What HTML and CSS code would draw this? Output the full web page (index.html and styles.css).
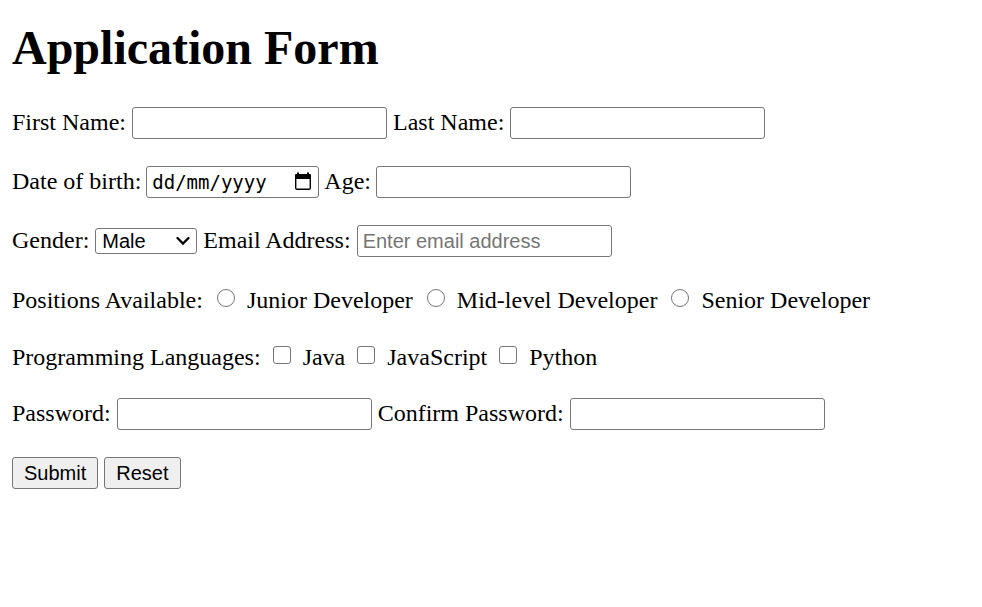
FILE: index.html
```html
<!DOCTYPE html>
<html lang="en">
<head>
<meta charset="utf-8">
<title>Application Form</title>
<link rel="stylesheet" href="styles.css">
</head>
<body>
<h1>Application Form</h1>
<form>
  <div class="row">
    <label for="first">First Name:</label>
    <input class="field" type="text" id="first">
    <label for="last">Last Name:</label>
    <input class="field" type="text" id="last">
  </div>
  <div class="row date-row">
    <label for="dob">Date of birth:</label>
    <span class="date">
      <input class="field date-field" type="text" id="dob" placeholder="dd/mm/yyyy">
      <svg class="calendar" viewBox="0 0 18 20" aria-hidden="true"><path d="M2 3h14q1 0 1 1v13q0 2-2 2H3q-2 0-2-2V4q0-1 1-1zM2.4 8v9.6h13.2V8z" fill-rule="evenodd"/><path d="M3 1.5h2v2H3zM13 1.5h2v2h-2z"/></svg>
    </span>
    <label for="age">Age:</label>
    <input class="field" type="text" id="age">
  </div>
  <div class="row">
    <label for="gender">Gender:</label>
    <span class="select">
      <select class="field select-field" id="gender"><option>Male</option><option>Female</option></select>
      <svg class="chevron" viewBox="0 0 14 10" aria-hidden="true"><path d="M1.5 2L7 7.5 12.5 2"/></svg>
    </span>
    <label for="email">Email Address:</label>
    <input class="field" type="email" id="email" placeholder="Enter email address">
  </div>
  <div class="row choices">
    <span>Positions Available:</span>
    <label class="choice"><input class="radio" type="radio" name="position">Junior Developer</label>
    <label class="choice"><input class="radio" type="radio" name="position">Mid-level Developer</label>
    <label class="choice"><input class="radio" type="radio" name="position">Senior Developer</label>
  </div>
  <div class="row choices languages">
    <span>Programming Languages:</span>
    <label class="choice"><input class="check" type="checkbox">Java</label>
    <label class="choice"><input class="check" type="checkbox">JavaScript</label>
    <label class="choice"><input class="check" type="checkbox">Python</label>
  </div>
  <div class="row">
    <label for="password">Password:</label>
    <input class="field" type="password" id="password">
    <label for="confirm">Confirm Password:</label>
    <input class="field" type="password" id="confirm">
  </div>
  <div class="row">
    <button class="button" type="submit">Submit</button>
    <button class="button" type="reset">Reset</button>
  </div>
</form>
</body>
</html>
```
FILE: styles.css
```css
* { box-sizing: border-box; }
body {
  margin: 20px 12px;
  background: #fff;
  color: #000;
  font: 24px/28px "Liberation Serif", "Times New Roman", serif;
}
h1 { margin: 0 0 31px; font-size: 48px; line-height: 56px; }
form { display: flex; flex-direction: column; gap: 27px; }
.row { display: flex; flex-wrap: wrap; align-items: center; column-gap: 6px; }
.row > label { line-height: 30px; padding-bottom: 2px; }
.date-row { column-gap: 5px; }
.field {
  width: 255px;
  height: 32px;
  margin: 0;
  padding: 2px 5px;
  border: 1px solid #767676;
  border-radius: 3px;
  background: #fff;
  color: #000;
  font: 20px "Liberation Sans", Arial, sans-serif;
}
.field::placeholder { color: #757575; }
.date, .select { position: relative; display: flex; }
.date-field { width: 173px; font: 19px "DejaVu Sans Mono", monospace; }
.date-field::placeholder { color: #000; }
.calendar { position: absolute; right: 7px; top: 5px; width: 18px; height: 20px; }
.select-field { width: 102px; height: 26px; padding: 0 6px; appearance: none; }
.chevron { position: absolute; right: 7px; top: 8px; width: 14px; height: 10px; fill: none; stroke: #000; stroke-width: 2.3; stroke-linecap: round; }
.choices { column-gap: 14px; padding-top: 2px; }
.languages { column-gap: 12px; }
.row > .choice { display: flex; align-items: center; gap: 12px; line-height: 28px; padding: 0; }
.radio, .check {
  appearance: none;
  width: 18px;
  height: 18px;
  margin: 0 0 4px;
  border: 1px solid #767676;
  background: #fff;
}
.radio { border-radius: 50%; }
.check { border-radius: 3px; }
.button {
  height: 32px;
  padding: 0 11px;
  border: 1px solid #767676;
  border-radius: 3px;
  background: #efefef;
  color: #000;
  font: 20px "Liberation Sans", Arial, sans-serif;
}
```
